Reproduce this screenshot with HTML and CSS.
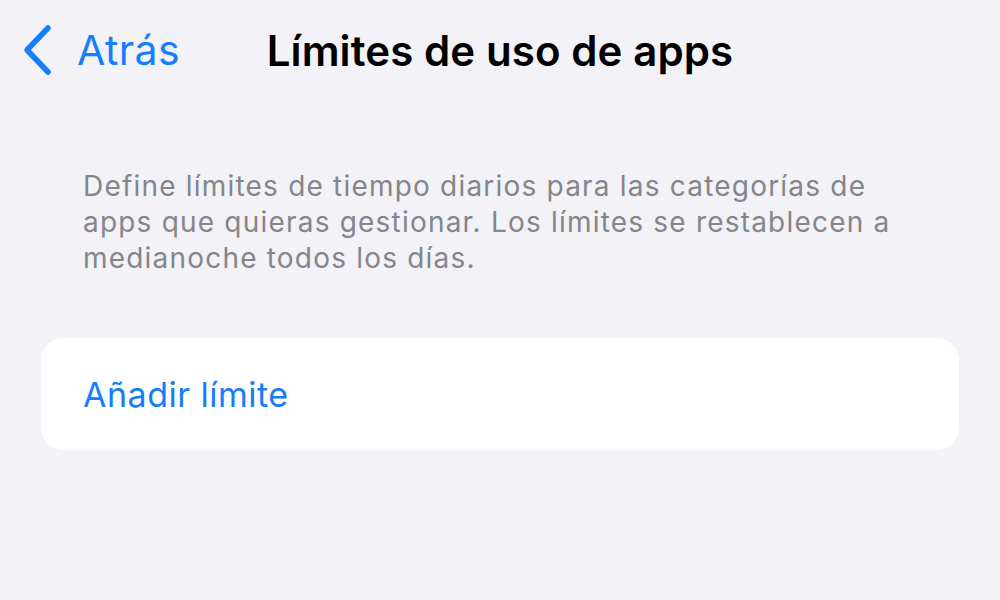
FILE: index.html
```html
<!DOCTYPE html>
<html lang="es">
<head>
    <meta charset="UTF-8">
    <meta name="viewport" content="width=device-width, initial-scale=1.0">
    <title>Límites de uso de apps</title>
    <link rel="stylesheet" href="styles.css">
</head>
<body>
    <div class="navbar">
        <a class="back" href="#">
            <svg class="chevron" width="34" height="54" viewBox="0 0 34 54">
                <polyline points="27,5 6,27 27,49" fill="none" stroke="currentColor" stroke-width="5.5" stroke-linecap="round" stroke-linejoin="round"/>
            </svg>
            <span>Atrás</span>
        </a>
        <div class="title">Límites de uso de apps</div>
        <div></div>
    </div>

    <p class="footnote">Define límites de tiempo diarios para las categorías de apps que quieras gestionar. Los límites se restablecen a medianoche todos los días.</p>

    <div class="group">
        <a class="cell" href="#">Añadir límite</a>
    </div>
</body>
</html>
```

FILE: styles.css
```css
* {
    margin: 0;
    padding: 0;
    box-sizing: border-box;
}

body {
    background: #f2f2f7;
    font-family: Inter, 'Noto Sans', sans-serif;
    width: 1000px;
    height: 600px;
    overflow: hidden;
}

a {
    text-decoration: none;
    color: #157efb;
}

.navbar {
    display: grid;
    grid-template-columns: 1fr auto 1fr;
    align-items: center;
    height: 100px;
}

.back {
    display: flex;
    align-items: center;
    gap: 22px;
    padding-left: 21px;
    font-size: 41px;
    letter-spacing: 0.4px;
}

.chevron {
    display: block;
}

.title {
    font-size: 42px;
    font-weight: 600;
    color: #000;
    letter-spacing: 0.1px;
}

.footnote {
    margin: 68px 0 0 83px;
    width: 840px;
    font-size: 28px;
    line-height: 36px;
    letter-spacing: 1.2px;
    color: #85858a;
}

.group {
    margin: 62px 41px 0;
    background: #fff;
    border-radius: 22px;
}

.cell {
    display: flex;
    align-items: center;
    height: 112px;
    padding-left: 42px;
    font-size: 34px;
    letter-spacing: 0.5px;
}
```
